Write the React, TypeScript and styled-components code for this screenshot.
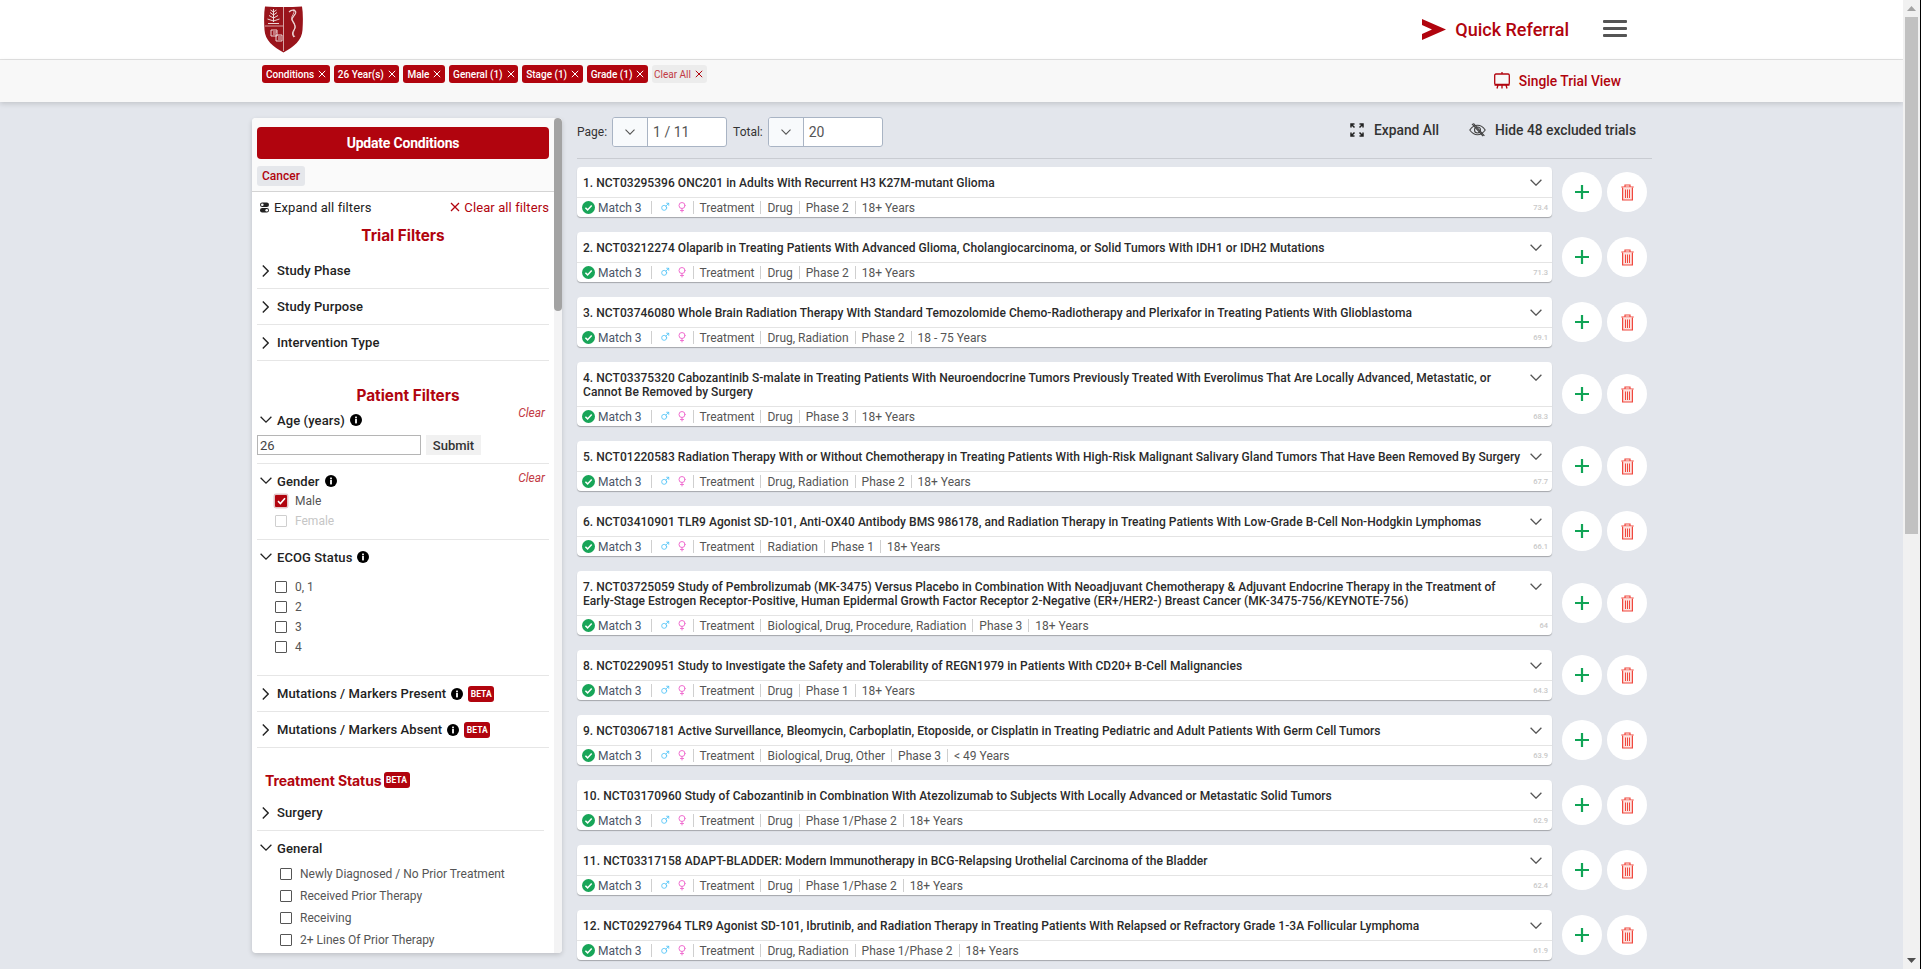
import React from "react";
import styled, { createGlobalStyle } from "styled-components";
import { Mars, Venus } from "lucide-react";

const RED = "#b1040e";

const Global = createGlobalStyle`
  html, body { margin: 0; padding: 0; height: 100%; overflow: hidden; background: #000; }
  body { font-family: Roboto, "Liberation Sans", sans-serif; }
  * { box-sizing: border-box; }
`;

const Frame = styled.div`
  width: 1920px;
  height: 100vh;
  display: flex;
  overflow: hidden;
`;
const Pane = styled.div`
  flex: 1;
  min-width: 0;
  height: 100%;
  overflow: hidden;
  background: #e3e6ec;
`;
const PageScrollbar = styled.div`
  width: 17px;
  flex: none;
  height: 100%;
  background: #f1f1f1;
  display: flex;
  flex-direction: column;
  align-items: center;
`;
const ScrollArrow = styled.div`
  height: 17px;
  flex: none;
  display: flex;
  align-items: center;
  justify-content: center;
`;
const PageThumb = styled.div`
  width: 13px;
  height: 517px;
  background: #c1c1c1;
`;
const ScrollGap = styled.div`
  flex: 1;
`;

const TopBar = styled.header`
  height: 60px;
  background: #fff;
  border-bottom: 1px solid #e2e2e2;
  display: flex;
  align-items: center;
  padding-left: 264px;
`;
const LogoBox = styled.div`
  width: 39px;
  height: 47px;
  flex: none;
  svg { display: block; }
`;
const QuickReferral = styled.a`
  margin-left: auto;
  display: flex;
  align-items: center;
  gap: 9px;
  color: ${RED};
  font-size: 18px;
  font-weight: 500;
  margin-right: 34px;
  margin-top: -1px;
`;
const Burger = styled.div`
  width: 24px;
  margin-right: 276px;
  margin-top: -2px;
  display: flex;
  flex-direction: column;
  gap: 4px;
  i { display: block; height: 3px; background: #555; border-radius: 1px; }
`;
const SubBar = styled.div`
  height: 42px;
  background: #f8f8f8;
  box-shadow: 0 2px 5px rgba(0, 0, 0, 0.14);
  display: flex;
  align-items: flex-start;
  padding: 5px 282px 0 262px;
  position: relative;
`;
const Chips = styled.div`
  display: flex;
  gap: 4px;
`;
const Chip = styled.span<{ $ghost?: boolean }>`
  height: 18px;
  padding: 0 3.6px 0 ${(p) => (p.$ghost ? 2 : 4)}px;
  border-radius: 3px;
  display: inline-flex;
  align-items: center;
  gap: 4px;
  font-size: 10px;
  font-weight: ${(p) => (p.$ghost ? 400 : 500)};
  background: ${(p) => (p.$ghost ? "#ececec" : RED)};
  color: ${(p) => (p.$ghost ? "#c23a44" : "#fff")};
  svg { flex: none; }
`;
const SingleTrial = styled.a`
  margin-left: auto;
  margin-top: 7px;
  display: flex;
  align-items: center;
  gap: 9px;
  color: ${RED};
  font-size: 13.8px;
  font-weight: 500;
`;

const Body = styled.div`
  display: flex;
  align-items: flex-start;
  padding-left: 252px;
`;
const Sidebar = styled.aside`
  width: 310px;
  height: 835px;
  margin-top: 16px;
  flex: none;
  display: flex;
  overflow: hidden;
  background: #fff;
  border-radius: 4px;
  box-shadow: 0 2px 5px rgba(0, 0, 0, 0.16);
`;
const SidePanel = styled.div`
  width: 302px;
  flex: none;
  overflow: hidden;
`;
const SideTrack = styled.div`
  width: 8px;
  flex: none;
  background: #f3f3f4;
`;
const SideThumb = styled.div`
  height: 193px;
  border-radius: 4px;
  background: #a3a3a3;
`;
const SideTop = styled.div`
  background: #fafafa;
  padding: 9px 5px 5px;
  height: 74px;
  border-bottom: 1px solid #d4d4d4;
`;
const UpdateButton = styled.button`
  display: block;
  width: 100%;
  height: 32px;
  border: 0;
  border-radius: 4px;
  background: ${RED};
  color: #fff;
  font-family: inherit;
  font-size: 14px;
  font-weight: 700;
  letter-spacing: -0.2px;
`;
const CancerTag = styled.span`
  display: inline-flex;
  align-items: center;
  height: 20px;
  margin-top: 7px;
  padding: 0 5px;
  border-radius: 3px;
  background: #e5e7eb;
  color: ${RED};
  font-size: 12px;
  font-weight: 500;
`;
const FilterBody = styled.div`
  padding: 0 5px;
`;
const ExpandRow = styled.div`
  height: 30px;
  display: flex;
  align-items: center;
  font-size: 13px;
  color: #222;
  padding-left: 3px;
  gap: 5px;
  letter-spacing: 0.1px;
`;
const ClearAllFilters = styled.span`
  margin-left: auto;
  display: inline-flex;
  align-items: center;
  gap: 4px;
  color: ${RED};
`;
const Heading = styled.div<{ $pad: number; $h: number; $shift?: number }>`
  padding-top: ${(p) => p.$pad}px;
  height: ${(p) => p.$h}px;
  line-height: 22px;
  text-align: center;
  font-family: Inter, Roboto, sans-serif;
  font-size: 15.3px;
  font-weight: 700;
  color: ${RED};
  padding-left: ${(p) => p.$shift ?? 0}px;
`;
const TreatmentHeading = styled.div`
  margin: 22px 0 5px;
  padding-left: 8px;
  height: 20px;
  display: flex;
  align-items: center;
  font-family: Inter, Roboto, sans-serif;
  font-size: 14px;
  font-weight: 700;
  letter-spacing: -0.1px;
  color: ${RED};
  gap: 2px;
`;
const Row = styled.div<{ $short?: boolean }>`
  height: 36px;
  display: flex;
  align-items: center;
  border-bottom: 1px solid #e6e6e6;
  font-size: 13px;
  font-weight: 500;
  color: #222;
  gap: 5px;
  margin-right: ${(p) => (p.$short ? 5 : 0)}px;
  letter-spacing: 0.1px;
`;
const Group = styled.div<{ $pt: number; $pb: number }>`
  padding: ${(p) => p.$pt}px 0 ${(p) => p.$pb}px;
  border-bottom: 1px solid #e6e6e6;
`;
const OpenGroup = styled.div`
  padding-top: 7px;
`;
const Head = styled.div`
  height: 20px;
  display: flex;
  align-items: center;
  gap: 5px;
  font-size: 13px;
  font-weight: 500;
  color: #222;
  letter-spacing: 0.1px;
`;
const Clear = styled.span<{ $top: number }>`
  margin-left: auto;
  margin-right: 4px;
  align-self: flex-start;
  margin-top: ${(p) => p.$top}px;
  font-size: 12px;
  font-style: italic;
  font-weight: 400;
  color: #c23a44;
  line-height: 14px;
  letter-spacing: 0;
`;
const AgeRow = styled.div`
  display: flex;
  gap: 5px;
  margin-top: 5px;
`;
const AgeInput = styled.input`
  width: 164px;
  height: 20px;
  border: 1px solid #b5b5b5;
  padding: 0 2px;
  font-family: inherit;
  font-size: 13px;
  color: #444;
  background: #fff;
  outline: 0;
`;
const SubmitBtn = styled.button`
  width: 55px;
  height: 20px;
  border: 0;
  background: #f1f1f1;
  font-family: inherit;
  font-size: 13px;
  font-weight: 500;
  color: #333;
  padding: 0;
`;
const CheckList = styled.div<{ $mt?: number; $indent: number; $h: number }>`
  margin-top: ${(p) => p.$mt ?? 0}px;
  padding-left: ${(p) => p.$indent}px;
  --item-h: ${(p) => p.$h}px;
`;
const CheckItem = styled.div<{ $disabled?: boolean }>`
  height: var(--item-h);
  display: flex;
  align-items: center;
  gap: 8px;
  font-size: 12px;
  color: ${(p) => (p.$disabled ? "#c6c6c6" : "#555")};
`;
const Box = styled.span<{ $checked?: boolean; $disabled?: boolean }>`
  width: 12px;
  height: 12px;
  flex: none;
  display: inline-flex;
  align-items: center;
  justify-content: center;
  border: ${(p) => (p.$checked ? "0" : `1px solid ${p.$disabled ? "#cfcfcf" : "#555"}`)};
  background: ${(p) => (p.$checked ? RED : "#fff")};
  box-shadow: ${(p) => (p.$checked ? "0 0 0 1.5px #e3c5c7" : "none")};
  border-radius: 1px;
`;
const Beta = styled.span`
  display: inline-flex;
  align-items: center;
  justify-content: center;
  width: 26px;
  height: 16px;
  border-radius: 3px;
  background: ${RED};
  color: #fff;
  font-family: Roboto, sans-serif;
  font-size: 8.5px;
  font-weight: 700;
  letter-spacing: 0;
`;

const Main = styled.main`
  width: 1075px;
  margin-left: 15px;
  padding-top: 15px;
  flex: none;
`;
const Toolbar = styled.div`
  height: 42px;
  padding-bottom: 11px;
  border-bottom: 1px solid #c9ccd2;
  margin-bottom: 8px;
  display: flex;
  align-items: center;
`;
const PagerLabel = styled.span<{ $gap: number }>`
  font-size: 12px;
  color: #333;
  margin-left: ${(p) => p.$gap}px;
  margin-right: 5px;
`;
const Select = styled.div`
  width: 115px;
  height: 30px;
  display: flex;
  border: 1px solid #a9b4c4;
  border-radius: 3px;
  background: #fff;
  overflow: hidden;
`;
const SelectArrow = styled.span`
  width: 35px;
  flex: none;
  display: flex;
  align-items: center;
  justify-content: center;
  background: #f8fafc;
  border-right: 1px solid #a9b4c4;
`;
const SelectValue = styled.span`
  padding-left: 5px;
  font-size: 14px;
  line-height: 28px;
  color: #555;
`;
const ToolAction = styled.a<{ $gap: number; $right?: number }>`
  display: inline-flex;
  align-items: center;
  gap: ${(p) => p.$gap}px;
  font-size: 13.8px;
  font-weight: 500;
  color: #333;
  margin-right: ${(p) => p.$right ?? 0}px;
`;
const ToolActions = styled.div`
  margin-left: auto;
  margin-right: 16px;
  margin-top: -4px;
  display: flex;
  align-items: center;
`;
const List = styled.div`
  display: flex;
  flex-direction: column;
  gap: 15px;
`;
const TrialRow = styled.div`
  display: flex;
  align-items: center;
  gap: 10px;
`;
const Card = styled.article`
  width: 975px;
  flex: none;
  background: #fff;
  border-radius: 4px;
  box-shadow: 0 1px 1px 0 rgba(0, 0, 0, 0.28);
`;
const TitleRow = styled.div`
  display: flex;
  align-items: flex-start;
  justify-content: space-between;
  padding: 9px 10px 7px 6px;
  border-bottom: 1px solid #e4e4e4;
`;
const Title = styled.h3`
  margin: 0;
  width: 941px;
  font-size: 12px;
  line-height: 14px;
  font-weight: 500;
  letter-spacing: 0.045px;
  color: #2a2a2a;
`;
const ChevronWrap = styled.span`
  margin-top: 3px;
  flex: none;
`;
const MetaRow = styled.div`
  height: 19px;
  display: flex;
  align-items: center;
  padding: 0 4px 0 5px;
  font-size: 12px;
  color: #555;
`;
const MatchLabel = styled.span`
  margin: 0 3.5px 0 3px;
  color: #4a5568;
`;
const Sep = styled.i`
  width: 1px;
  height: 13px;
  background: #cfcfcf;
  margin: 0 6px;
`;
const GenderIcons = styled.span`
  display: inline-flex;
  align-items: center;
  gap: 6px;
  margin: -2px -1px 0 1.5px;
`;
const Score = styled.span`
  margin-left: auto;
  font-size: 7.5px;
  font-weight: 500;
  color: #c8c8c8;
`;
const Actions = styled.div`
  display: flex;
  gap: 5px;
`;
const RoundBtn = styled.button`
  width: 40px;
  height: 40px;
  border: 0;
  border-radius: 50%;
  background: #fff;
  display: flex;
  align-items: center;
  justify-content: center;
  padding: 0;
`;

const Chev = ({ dir = "down", size = 12, color = "#222" }: { dir?: "down" | "right"; size?: number; color?: string }) =>
  dir === "down" ? (
    <svg width={size} height={size * 0.6} viewBox="0 0 12 7.2" fill="none" stroke={color} strokeWidth="1.3" style={{ display: "block" }}>
      <path d="M.6.8 6 6.2 11.4.8" />
    </svg>
  ) : (
    <svg width="7" height="12" viewBox="0 0 7 12" fill="none" stroke={color} strokeWidth="1.4" style={{ display: "block" }}>
      <path d="M.8.6 6.2 6 .8 11.4" />
    </svg>
  );

const ChevSlot = styled.span`
  width: 15px;
  flex: none;
  display: flex;
  justify-content: center;
  padding-left: 2px;
`;

const X = ({ size = 8, color = "#fff" }: { size?: number; color?: string }) => (
  <svg width={size} height={size} viewBox="0 0 8 8" fill="none" stroke={color} strokeWidth="1">
    <path d="M.8.8l6.400 6.400M7.200.8.8 7.200" />
  </svg>
);

const Info = () => (
  <svg width="12" height="12" viewBox="0 0 12 12">
    <circle cx="6" cy="6" r="6" fill="#000" />
    <rect x="5.100" y="5" width="1.800" height="4.400" fill="#fff" />
    <rect x="5.100" y="2.600" width="1.800" height="1.700" fill="#fff" />
  </svg>
);

const Logo = () => (
  <svg width="39" height="47" viewBox="0 0 39 47">
    <path d="M1 0.500Q19.500 1.500 38 0.500Q39.500 9 38.500 24C38 34 30 41 19.500 46.500C9 41 1 34 .5 24Q-.5 9 1 .5z" fill="#99141b" />
    <path d="M1 20h18M19.500 1v44" stroke="#e6c6c6" strokeWidth=".8" fill="none" />
    <path d="M9.500 3v13M9.500 6 6.500 4M9.500 6 12.500 4M9.500 9 6 6.500M9.500 9 13 6.500M9.500 12 5 9.500M9.500 12 14 9.500M9.500 15 3.500 13M9.500 15 15.500 13M4 17.500h11" stroke="#ecd6d6" strokeWidth="1" fill="none" />
    <path d="M25 6c3-3 8-2 6.500 1.500-1.500 3-4.500 4-3 7s4 5.500 2 8.500c-2 3-3 5-.500 8" stroke="#ecd6d6" strokeWidth="1.200" fill="none" />
    <path d="M30 3c1 5-3 7-2.500 10s4.500 6 3.500 9-3 6 0 9" stroke="#ecd6d6" strokeWidth=".8" fill="none" />
    <path d="M7 24h6v6H7zM12 29h6v6h-6zM9 26h4M14 31h3M9 28h3M14 33h3" stroke="#ecd6d6" strokeWidth="1" fill="none" />
  </svg>
);

const Send = () => (
  <svg width="24" height="21" viewBox="0 0 24 21">
    <path d="M0 0 24 10.500 0 21V15L10 10.500 0 6z" fill={RED} />
  </svg>
);

const Easel = () => (
  <svg width="16" height="17" viewBox="0 0 16 17" fill="none" stroke={RED} strokeWidth="1.300">
    <path d="M8 0v2" />
    <rect x=".7" y="2" width="14.600" height="10.500" rx="1.200" />
    <path d="M.5 13h15M4 13l-1 3.500M12 13l1 3.500M8 13v3.500" />
  </svg>
);

const ExpandIcon = () => (
  <svg width="14" height="14" viewBox="0 0 14 14" fill="none" stroke="#222" strokeWidth="1.500">
    <path d="M1 4.500V1h3.500M1 1l3.500 3.500M13 4.500V1H9.500M13 1 9.500 4.500M1 9.500V13h3.500M1 13l3.500-3.500M13 9.500V13H9.500M13 13 9.500 9.500" />
  </svg>
);

const HideIcon = () => (
  <svg width="17" height="14" viewBox="0 0 17 14" fill="none" stroke="#444" strokeWidth="1.100">
    <path d="M.8 7C3 3.800 5.500 2.300 8.500 2.300S14 3.800 16.200 7C14 10.200 11.500 11.700 8.500 11.700S3 10.200.8 7z" />
    <circle cx="8.500" cy="7" r="3" />
    <path d="M3 .8l11 12.400M4.400.4l11 12.400" />
  </svg>
);

const Sliders = () => (
  <svg width="9" height="11" viewBox="0 0 9 11" style={{ flex: "none" }}>
    <rect x="0" y=".5" width="9" height="4.500" rx="2.200" fill="#222" />
    <circle cx="2.300" cy="2.700" r="1.300" fill="#fff" />
    <rect x="0" y="6" width="9" height="4.500" rx="2.200" fill="#222" />
    <circle cx="6.700" cy="8.200" r="1.300" fill="#fff" />
  </svg>
);

const CheckCircle = () => (
  <svg width="13" height="13" viewBox="0 0 13 13" style={{ flex: "none" }}>
    <circle cx="6.500" cy="6.500" r="6.500" fill="#18a558" />
    <path d="M3.400 6.700 5.600 8.900 9.700 4.500" fill="none" stroke="#fff" strokeWidth="1.500" />
  </svg>
);

const Plus = () => (
  <svg width="16" height="16" viewBox="0 0 16 16" stroke="#10a456" strokeWidth="2.200">
    <path d="M8 1v14M1 8h14" />
  </svg>
);

const Trash = () => (
  <svg width="13" height="17" viewBox="0 0 13 17" fill="none" stroke="#f0483e" strokeWidth="1.200">
    <path d="M.3 3h12.400M4 3V1h5v2" />
    <path d="M1.600 3.500V16h9.800V3.500" fill="#fde3e0" />
    <path d="M4.500 5.500V14M6.500 5.500V14M8.500 5.500V14" strokeWidth="1" />
  </svg>
);

type Trial = { title: string; type: string; phase: string; age: string; score: string };
const trials: Trial[] = [
  { title: "1. NCT03295396 ONC201 in Adults With Recurrent H3 K27M-mutant Glioma", type: "Drug", phase: "Phase 2", age: "18+ Years", score: "73.4" },
  { title: "2. NCT03212274 Olaparib in Treating Patients With Advanced Glioma, Cholangiocarcinoma, or Solid Tumors With IDH1 or IDH2 Mutations", type: "Drug", phase: "Phase 2", age: "18+ Years", score: "71.3" },
  { title: "3. NCT03746080 Whole Brain Radiation Therapy With Standard Temozolomide Chemo-Radiotherapy and Plerixafor in Treating Patients With Glioblastoma", type: "Drug, Radiation", phase: "Phase 2", age: "18 - 75 Years", score: "69.1" },
  { title: "4. NCT03375320 Cabozantinib S-malate in Treating Patients With Neuroendocrine Tumors Previously Treated With Everolimus That Are Locally Advanced, Metastatic, or Cannot Be Removed by Surgery", type: "Drug", phase: "Phase 3", age: "18+ Years", score: "68.3" },
  { title: "5. NCT01220583 Radiation Therapy With or Without Chemotherapy in Treating Patients With High-Risk Malignant Salivary Gland Tumors That Have Been Removed By Surgery", type: "Drug, Radiation", phase: "Phase 2", age: "18+ Years", score: "67.7" },
  { title: "6. NCT03410901 TLR9 Agonist SD-101, Anti-OX40 Antibody BMS 986178, and Radiation Therapy in Treating Patients With Low-Grade B-Cell Non-Hodgkin Lymphomas", type: "Radiation", phase: "Phase 1", age: "18+ Years", score: "66.1" },
  { title: "7. NCT03725059 Study of Pembrolizumab (MK-3475) Versus Placebo in Combination With Neoadjuvant Chemotherapy & Adjuvant Endocrine Therapy in the Treatment of Early-Stage Estrogen Receptor-Positive, Human Epidermal Growth Factor Receptor 2-Negative (ER+/HER2-) Breast Cancer (MK-3475-756/KEYNOTE-756)", type: "Biological, Drug, Procedure, Radiation", phase: "Phase 3", age: "18+ Years", score: "64" },
  { title: "8. NCT02290951 Study to Investigate the Safety and Tolerability of REGN1979 in Patients With CD20+ B-Cell Malignancies", type: "Drug", phase: "Phase 1", age: "18+ Years", score: "64.3" },
  { title: "9. NCT03067181 Active Surveillance, Bleomycin, Carboplatin, Etoposide, or Cisplatin in Treating Pediatric and Adult Patients With Germ Cell Tumors", type: "Biological, Drug, Other", phase: "Phase 3", age: "< 49 Years", score: "63.9" },
  { title: "10. NCT03170960 Study of Cabozantinib in Combination With Atezolizumab to Subjects With Locally Advanced or Metastatic Solid Tumors", type: "Drug", phase: "Phase 1/Phase 2", age: "18+ Years", score: "62.9" },
  { title: "11. NCT03317158 ADAPT-BLADDER: Modern Immunotherapy in BCG-Relapsing Urothelial Carcinoma of the Bladder", type: "Drug", phase: "Phase 1/Phase 2", age: "18+ Years", score: "62.4" },
  { title: "12. NCT02927964 TLR9 Agonist SD-101, Ibrutinib, and Radiation Therapy in Treating Patients With Relapsed or Refractory Grade 1-3A Follicular Lymphoma", type: "Drug, Radiation", phase: "Phase 1/Phase 2", age: "18+ Years", score: "61.9" },
];

const chips = ["Conditions", "26 Year(s)", "Male", "General (1)", "Stage (1)", "Grade (1)"];

const RightChev = () => (
  <ChevSlot>
    <Chev dir="right" />
  </ChevSlot>
);
const DownChev = () => (
  <ChevSlot>
    <Chev size={12} />
  </ChevSlot>
);

export default function App() {
  return (
    <Frame>
      <Global />
      <Pane>
        <TopBar>
          <LogoBox>
            <Logo />
          </LogoBox>
          <QuickReferral>
            <Send />
            Quick Referral
          </QuickReferral>
          <Burger>
            <i />
            <i />
            <i />
          </Burger>
        </TopBar>
        <SubBar>
          <Chips>
            {chips.map((c) => (
              <Chip key={c}>
                {c}
                <X />
              </Chip>
            ))}
            <Chip $ghost>
              Clear All
              <X color={RED} />
            </Chip>
          </Chips>
          <SingleTrial>
            <Easel />
            Single Trial View
          </SingleTrial>
        </SubBar>
        <Body>
          <Sidebar>
            <SidePanel>
              <SideTop>
                <UpdateButton>Update Conditions</UpdateButton>
                <CancerTag>Cancer</CancerTag>
              </SideTop>
              <FilterBody>
                <ExpandRow>
                  <Sliders />
                  Expand all filters
                  <ClearAllFilters>
                    <X size={10} color={RED} />
                    Clear all filters
                  </ClearAllFilters>
                </ExpandRow>
                <Heading $pad={3} $h={31}>Trial Filters</Heading>
                <Row><RightChev />Study Phase</Row>
                <Row><RightChev />Study Purpose</Row>
                <Row><RightChev />Intervention Type</Row>
                <Heading $pad={24} $h={49} $shift={10}>Patient Filters</Heading>
                <Group $pt={0} $pb={8}>
                  <Head>
                    <DownChev />
                    Age (years)
                    <Info />
                    <Clear $top={-4}>Clear</Clear>
                  </Head>
                  <AgeRow>
                    <AgeInput defaultValue="26" />
                    <SubmitBtn>Submit</SubmitBtn>
                  </AgeRow>
                </Group>
                <Group $pt={7} $pb={8}>
                  <Head>
                    <DownChev />
                    Gender
                    <Info />
                    <Clear $top={0}>Clear</Clear>
                  </Head>
                  <CheckList $indent={18} $h={20}>
                    <CheckItem>
                      <Box $checked>
                        <svg width="9" height="8" viewBox="0 0 9 8" fill="none" stroke="#fff" strokeWidth="1.600"><path d="M1 4.200 3.400 6.500 8 1.200" /></svg>
                      </Box>
                      Male
                    </CheckItem>
                    <CheckItem $disabled>
                      <Box $disabled />
                      Female
                    </CheckItem>
                  </CheckList>
                </Group>
                <Group $pt={7} $pb={18}>
                  <Head>
                    <DownChev />
                    ECOG Status
                    <Info />
                  </Head>
                  <CheckList $mt={10} $indent={18} $h={20}>
                    {["0, 1", "2", "3", "4"].map((v) => (
                      <CheckItem key={v}>
                        <Box />
                        {v}
                      </CheckItem>
                    ))}
                  </CheckList>
                </Group>
                <Row>
                  <RightChev />
                  Mutations / Markers Present
                  <Info />
                  <Beta>BETA</Beta>
                </Row>
                <Row>
                  <RightChev />
                  Mutations / Markers Absent
                  <Info />
                  <Beta>BETA</Beta>
                </Row>
                <TreatmentHeading>
                  Treatment Status
                  <Beta>BETA</Beta>
                </TreatmentHeading>
                <Row $short><RightChev />Surgery</Row>
                <OpenGroup>
                  <Head>
                    <DownChev />
                    General
                  </Head>
                  <CheckList $mt={5} $indent={23} $h={22}>
                    {["Newly Diagnosed / No Prior Treatment", "Received Prior Therapy", "Receiving", "2+ Lines Of Prior Therapy"].map((v) => (
                      <CheckItem key={v}>
                        <Box />
                        {v}
                      </CheckItem>
                    ))}
                  </CheckList>
                </OpenGroup>
              </FilterBody>
            </SidePanel>
            <SideTrack>
              <SideThumb />
            </SideTrack>
          </Sidebar>
          <Main>
            <Toolbar>
              <PagerLabel $gap={0}>Page:</PagerLabel>
              <Select>
                <SelectArrow><Chev size={10} color="#555" /></SelectArrow>
                <SelectValue>1 / 11</SelectValue>
              </Select>
              <PagerLabel $gap={6}>Total:</PagerLabel>
              <Select>
                <SelectArrow><Chev size={10} color="#555" /></SelectArrow>
                <SelectValue>20</SelectValue>
              </Select>
              <ToolActions>
                <ToolAction $gap={10} $right={30}>
                  <ExpandIcon />
                  Expand All
                </ToolAction>
                <ToolAction $gap={9}>
                  <HideIcon />
                  Hide 48 excluded trials
                </ToolAction>
              </ToolActions>
            </Toolbar>
            <List>
              {trials.map((t) => (
                <TrialRow key={t.title}>
                  <Card>
                    <TitleRow>
                      <Title>{t.title}</Title>
                      <ChevronWrap><Chev size={12} color="#555" /></ChevronWrap>
                    </TitleRow>
                    <MetaRow>
                      <CheckCircle />
                      <MatchLabel>Match 3</MatchLabel>
                      <Sep />
                      <GenderIcons>
                        <Mars size={10} color="#4fc3f7" strokeWidth={2} />
                        <Venus size={12} color="#f06fd0" strokeWidth={2} />
                      </GenderIcons>
                      <Sep />
                      Treatment
                      <Sep />
                      {t.type}
                      <Sep />
                      {t.phase}
                      <Sep />
                      {t.age}
                      <Score>{t.score}</Score>
                    </MetaRow>
                  </Card>
                  <Actions>
                    <RoundBtn aria-label="add"><Plus /></RoundBtn>
                    <RoundBtn aria-label="remove"><Trash /></RoundBtn>
                  </Actions>
                </TrialRow>
              ))}
            </List>
          </Main>
        </Body>
      </Pane>
      <PageScrollbar>
        <ScrollArrow>
          <svg width="9" height="5" viewBox="0 0 9 5"><path d="M4.500 0 9 5H0z" fill="#a3a3a3" /></svg>
        </ScrollArrow>
        <PageThumb />
        <ScrollGap />
        <ScrollArrow>
          <svg width="9" height="5" viewBox="0 0 9 5"><path d="M4.500 5 9 0H0z" fill="#505050" /></svg>
        </ScrollArrow>
      </PageScrollbar>
    </Frame>
  );
}
